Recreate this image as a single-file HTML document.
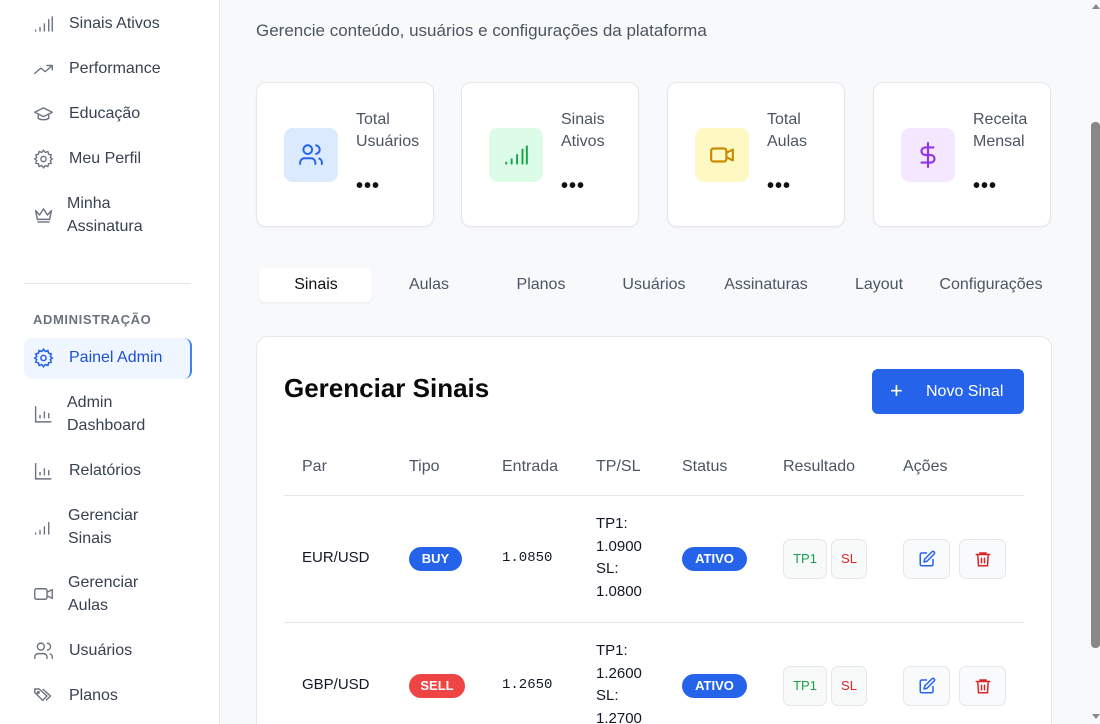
<!DOCTYPE html>
<html><head><meta charset="utf-8"><style>
*{margin:0;padding:0;box-sizing:border-box}
html{overflow:hidden;width:1100px;height:724px}
body{width:1100px;height:724px;overflow:hidden;background:#f8f9fb;font-family:"Liberation Sans",sans-serif;color:#111827;position:relative}
.a{position:absolute;white-space:nowrap}
#side{position:absolute;left:0;top:0;width:220px;height:724px;background:#fff;border-right:1px solid #e5e7eb}
.ni{position:absolute;left:33px;width:170px;font-size:16px;color:#374151}
.ni svg{position:absolute;left:0;top:50%;transform:translateY(-50%);width:21px;height:21px}
.ni span{position:absolute;left:36px;line-height:23px;top:0;white-space:nowrap}
.card{position:absolute;top:82px;width:178px;height:145px;background:#fff;border:1px solid #e5e7eb;border-radius:10px;box-shadow:0 1px 2px rgba(0,0,0,.04)}
.ib{position:absolute;left:27px;top:45px;width:54px;height:54px;border-radius:9px;display:flex;align-items:center;justify-content:center}
.ct{position:absolute;left:99px;top:26px;font-size:16px;line-height:22px;color:#4b5563}
.dots{position:absolute;left:99px;top:92px;font-size:20px;font-weight:bold;letter-spacing:1px;color:#111}
.tab{position:absolute;top:276px;width:112px;text-align:center;font-size:16px;color:#4b5563}
.th{position:absolute;top:458px;font-size:16px;color:#4b5563}
.pill{position:absolute;height:24px;border-radius:12px;color:#fff;font-size:13px;font-weight:bold;line-height:24px;text-align:center}
.sb{position:absolute;width:44px;height:40px;border:1px solid #e5e7eb;border-radius:7px;background:#f8faf9;font-size:13px;text-align:center;line-height:38px}
.ab{position:absolute;width:47px;height:40px;border:1px solid #e5e7eb;border-radius:7px;background:#f8fafc;display:flex;align-items:center;justify-content:center}
.mono{font-family:"Liberation Mono",monospace;font-size:14px}
</style></head><body>
<div id="side">
<div class="ni" style="top:12px;height:23px"><svg viewBox="0 0 24 24" fill="none" stroke="#6b7280" stroke-width="1.6" stroke-linecap="round"><path d="M3 19v1M8 16v4M13 12v8M18 7v13M22 4v16"/></svg><span>Sinais Ativos</span></div>
<div class="ni" style="top:57px;height:23px"><svg viewBox="0 0 24 24" fill="none" stroke="#6b7280" stroke-width="1.6" stroke-linecap="round" stroke-linejoin="round"><path d="M2 17l7-6 5 4 8-7M16 8h6v5"/></svg><span>Performance</span></div>
<div class="ni" style="top:102px;height:23px"><svg viewBox="0 0 24 24" fill="none" stroke="#6b7280" stroke-width="1.6" stroke-linejoin="round"><path d="M2 10l10-5 10 5-10 5z"/><path d="M6 12v5c3 2 9 2 12 0v-5"/></svg><span>Educação</span></div>
<div class="ni" style="top:147px;height:23px"><svg viewBox="0 0 24 24" fill="none" stroke="#6b7280" stroke-width="1.6"><circle cx="12" cy="12" r="3"/><path d="M12 2l2 2.5 3-1 .8 3 3 .8-1 3L22 12l-2.2 1.7 1 3-3 .8-.8 3-3-1L12 22l-2-2.5-3 1-.8-3-3-.8 1-3L2 12l2.2-1.7-1-3 3-.8.8-3 3 1z"/></svg><span>Meu Perfil</span></div>
<div class="ni" style="top:192px;height:46px"><svg viewBox="0 0 24 24" fill="none" stroke="#6b7280" stroke-width="1.6" stroke-linejoin="round"><path d="M3 7l4.5 5L12 5l4.5 7L21 7l-2 10H5z"/><path d="M5 20h14"/></svg><span style="left:34px">Minha<br>Assinatura</span></div>
<div class="a" style="left:24px;top:283px;width:167px;height:1px;background:#e5e7eb"></div>
<div class="a" style="left:33px;top:312px;font-size:13px;font-weight:bold;color:#6b7280;letter-spacing:.6px">ADMINISTRAÇÃO</div>
<div class="a" style="left:24px;top:338px;width:168px;height:41px;background:#eff6ff;border-radius:8px;border-right:2px solid #3b82f6"></div>
<div class="ni" style="top:346px;height:23px;color:#1d4ed8"><svg viewBox="0 0 24 24" fill="none" stroke="#2563eb" stroke-width="1.8"><circle cx="12" cy="12" r="3"/><path d="M12 2l2 2.5 3-1 .8 3 3 .8-1 3L22 12l-2.2 1.7 1 3-3 .8-.8 3-3-1L12 22l-2-2.5-3 1-.8-3-3-.8 1-3L2 12l2.2-1.7-1-3 3-.8.8-3 3 1z"/></svg><span>Painel Admin</span></div>
<div class="ni" style="top:391px;height:46px"><svg viewBox="0 0 24 24" fill="none" stroke="#6b7280" stroke-width="1.6"><path d="M3 3v18h18M8 17v-4M13 17V9M18 17v-6"/></svg><span style="left:34px">Admin<br>Dashboard</span></div>
<div class="ni" style="top:459px;height:23px"><svg viewBox="0 0 24 24" fill="none" stroke="#6b7280" stroke-width="1.6"><path d="M3 3v18h18M8 17v-4M13 17V9M18 17v-6"/></svg><span>Relatórios</span></div>
<div class="ni" style="top:504px;height:46px"><svg viewBox="0 0 24 24" fill="none" stroke="#6b7280" stroke-width="1.6" stroke-linecap="round"><path d="M3 19v1M8 16v4M13 12v8M18 7v13"/></svg><span style="left:35px">Gerenciar<br>Sinais</span></div>
<div class="ni" style="top:571px;height:46px"><svg viewBox="0 0 24 24" fill="none" stroke="#6b7280" stroke-width="1.6" stroke-linejoin="round"><rect x="2" y="6" width="14" height="12" rx="2"/><path d="M16 10l6-3v10l-6-3"/></svg><span style="left:35px">Gerenciar<br>Aulas</span></div>
<div class="ni" style="top:639px;height:23px"><svg viewBox="0 0 24 24" fill="none" stroke="#6b7280" stroke-width="1.6"><circle cx="9" cy="7" r="4"/><path d="M2 21v-2a4 4 0 0 1 4-4h6a4 4 0 0 1 4 4v2M16 3a4 4 0 0 1 0 8M22 21v-2a4 4 0 0 0-3-4"/></svg><span>Usuários</span></div>
<div class="ni" style="top:684px;height:23px"><svg viewBox="0 0 24 24" fill="none" stroke="#6b7280" stroke-width="1.6" stroke-linejoin="round"><path d="M2 8V4h5l9 8-5 5zM11 4l9 8-5 5"/><circle cx="6" cy="8" r="1"/></svg><span>Planos</span></div>
</div>

<div class="a" style="left:256px;top:21px;font-size:17px;color:#4b5563">Gerencie conteúdo, usuários e configurações da plataforma</div>

<div class="card" style="left:256px"><div class="ib" style="background:#dbeafe"><svg width="26" height="26" viewBox="0 0 24 24" fill="none" stroke="#2563eb" stroke-width="1.8"><circle cx="9" cy="7" r="4"/><path d="M2 21v-2a4 4 0 0 1 4-4h6a4 4 0 0 1 4 4v2M16 3a4 4 0 0 1 0 8M22 21v-2a4 4 0 0 0-3-4"/></svg></div><div class="ct">Total<br>Usuários</div><div class="dots">•••</div></div>
<div class="card" style="left:461px"><div class="ib" style="background:#dcfce7"><svg width="26" height="26" viewBox="0 0 24 24" fill="none" stroke="#16a34a" stroke-width="1.8" stroke-linecap="round"><path d="M3 19v1M8 16v4M13 12v8M18 7v13M22 4v16"/></svg></div><div class="ct">Sinais<br>Ativos</div><div class="dots">•••</div></div>
<div class="card" style="left:667px"><div class="ib" style="background:#fef9c3"><svg width="26" height="26" viewBox="0 0 24 24" fill="none" stroke="#ca8a04" stroke-width="2" stroke-linejoin="round"><rect x="2" y="6" width="14" height="12" rx="2"/><path d="M16 10l6-3v10l-6-3"/></svg></div><div class="ct">Total<br>Aulas</div><div class="dots">•••</div></div>
<div class="card" style="left:873px"><div class="ib" style="background:#f3e8ff"><svg width="26" height="26" viewBox="0 0 24 24" fill="none" stroke="#9333ea" stroke-width="2" stroke-linecap="round"><path d="M12 1v22M17 5H9.5a3.5 3.5 0 0 0 0 7h5a3.5 3.5 0 0 1 0 7H6"/></svg></div><div class="ct">Receita<br>Mensal</div><div class="dots">•••</div></div>

<div class="a" style="left:259px;top:268px;width:113px;height:34px;background:#fff;border-radius:6px;box-shadow:0 1px 2px rgba(0,0,0,.06)"></div>
<div class="tab" style="left:260px;color:#111">Sinais</div>
<div class="tab" style="left:373px">Aulas</div>
<div class="tab" style="left:485px">Planos</div>
<div class="tab" style="left:598px">Usuários</div>
<div class="tab" style="left:710px">Assinaturas</div>
<div class="tab" style="left:823px">Layout</div>
<div class="tab" style="left:935px">Configurações</div>

<div class="a" style="left:256px;top:336px;width:796px;height:400px;background:#fff;border:1px solid #e5e7eb;border-radius:12px"></div>
<div class="a" style="left:284px;top:373px;font-size:26px;font-weight:bold;color:#0a0a0a">Gerenciar Sinais</div>
<div class="a" style="left:872px;top:369px;width:152px;height:45px;background:#2563eb;border-radius:6px;color:#fff;font-size:16px;line-height:45px"><span style="position:absolute;left:18px;font-size:22px;top:-1px">+</span><span style="position:absolute;left:54px">Novo Sinal</span></div>

<div class="th" style="left:302px">Par</div><div class="th" style="left:409px">Tipo</div><div class="th" style="left:502px">Entrada</div><div class="th" style="left:596px">TP/SL</div><div class="th" style="left:682px">Status</div><div class="th" style="left:783px">Resultado</div><div class="th" style="left:903px">Ações</div>
<div class="a" style="left:284px;top:495px;width:740px;height:1px;background:#e5e7eb"></div>
<div class="a" style="left:284px;top:622px;width:740px;height:1px;background:#e5e7eb"></div>

<div class="a" style="left:302px;top:549px;font-size:15px">EUR/USD</div>
<div class="pill" style="left:409px;top:547px;width:53px;background:#2563eb">BUY</div>
<div class="a mono" style="left:502px;top:550px">1.0850</div>
<div class="a" style="left:596px;top:513px;font-size:15px;line-height:22.5px">TP1:<br>1.0900<br>SL:<br>1.0800</div>
<div class="pill" style="left:682px;top:547px;width:65px;background:#2563eb">ATIVO</div>
<div class="sb" style="left:783px;top:539px;color:#16a34a">TP1</div>
<div class="sb" style="left:831px;top:539px;width:36px;color:#dc2626">SL</div>
<div class="ab" style="left:903px;top:539px"><svg width="18" height="18" viewBox="0 0 24 24" fill="none" stroke="#2563eb" stroke-width="2" stroke-linejoin="round"><path d="M12 4H5a2 2 0 0 0-2 2v13a2 2 0 0 0 2 2h13a2 2 0 0 0 2-2v-7"/><path d="M18.5 2.5a2.1 2.1 0 0 1 3 3L12 15l-4 1 1-4z"/></svg></div>
<div class="ab" style="left:959px;top:539px"><svg width="18" height="18" viewBox="0 0 24 24" fill="none" stroke="#dc2626" stroke-width="2" stroke-linecap="round"><path d="M3 6h18M8 6V4h8v2M5 6l1 15h12l1-15M10 11v6M14 11v6"/></svg></div>

<div class="a" style="left:302px;top:676px;font-size:15px">GBP/USD</div>
<div class="pill" style="left:409px;top:674px;width:56px;background:#ef4444">SELL</div>
<div class="a mono" style="left:502px;top:677px">1.2650</div>
<div class="a" style="left:596px;top:640px;font-size:15px;line-height:22.5px">TP1:<br>1.2600<br>SL:<br>1.2700</div>
<div class="pill" style="left:682px;top:674px;width:65px;background:#2563eb">ATIVO</div>
<div class="sb" style="left:783px;top:666px;color:#16a34a">TP1</div>
<div class="sb" style="left:831px;top:666px;width:36px;color:#dc2626">SL</div>
<div class="ab" style="left:903px;top:666px"><svg width="18" height="18" viewBox="0 0 24 24" fill="none" stroke="#2563eb" stroke-width="2" stroke-linejoin="round"><path d="M12 4H5a2 2 0 0 0-2 2v13a2 2 0 0 0 2 2h13a2 2 0 0 0 2-2v-7"/><path d="M18.5 2.5a2.1 2.1 0 0 1 3 3L12 15l-4 1 1-4z"/></svg></div>
<div class="ab" style="left:959px;top:666px"><svg width="18" height="18" viewBox="0 0 24 24" fill="none" stroke="#dc2626" stroke-width="2" stroke-linecap="round"><path d="M3 6h18M8 6V4h8v2M5 6l1 15h12l1-15M10 11v6M14 11v6"/></svg></div>

<div class="a" style="left:1091px;top:122px;width:9px;height:526px;background:#888;border-radius:4px"></div>
<div class="a" style="left:1092px;top:4px;width:0;height:0;border-left:4px solid transparent;border-right:4px solid transparent;border-bottom:5px solid #888"></div>
<div class="a" style="left:1092px;top:714px;width:0;height:0;border-left:4px solid transparent;border-right:4px solid transparent;border-top:5px solid #888"></div>
</body></html>
